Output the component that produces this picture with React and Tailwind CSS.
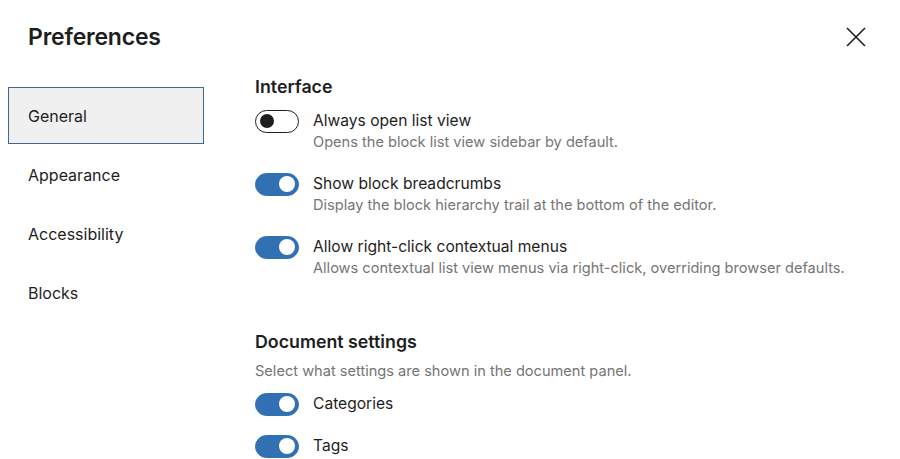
import React, { useState } from "react";

const Toggle = ({ checked, onChange }) => {
  return (
    <button
      type="button"
      onClick={onChange}
      className={
        checked
          ? "relative w-[44px] h-[23px] rounded-full bg-[#3171b3] border border-[#3171b3] shrink-0"
          : "relative w-[44px] h-[23px] rounded-full bg-white border-[1.5px] border-[#1e1e1e] shrink-0"
      }
    >
      <span
        className={
          checked
            ? "absolute top-1/2 -translate-y-1/2 right-[3px] w-[16px] h-[16px] rounded-full bg-white"
            : "absolute top-1/2 -translate-y-1/2 left-[4px] w-[14px] h-[14px] rounded-full bg-[#1e1e1e]"
        }
      />
    </button>
  );
};

const Option = ({ label, help, checked, onChange }) => (
  <div className="flex flex-col">
    <div className="flex items-center h-[20px]">
      <Toggle checked={checked} onChange={onChange} />
      <span className="ml-[14px] text-[15.6px] leading-[20px] text-[#1e1e1e]">{label}</span>
    </div>
    {help && (
      <p className="ml-[58px] mt-[1px] text-[14.6px] leading-[20px] text-[#757575]">{help}</p>
    )}
  </div>
);

const App = () => {
  const [tab, setTab] = useState("General");
  const [prefs, setPrefs] = useState({
    listView: false,
    breadcrumbs: true,
    contextMenus: true,
    categories: true,
    tags: true,
  });
  const flip = (key) => setPrefs({ ...prefs, [key]: !prefs[key] });
  const tabs = ["General", "Appearance", "Accessibility", "Blocks"];

  return (
    <div
      className="w-[900px] h-[459px] bg-white overflow-hidden"
      style={{ fontFamily: "Inter, 'Noto Sans', sans-serif" }}
    >
      <div className="flex items-center justify-between pl-[28px] pr-[32px] h-[74px]">
        <h1 className="text-[23px] font-semibold text-[#1e1e1e] tracking-[-0.2px]">Preferences</h1>
        <button type="button" className="w-[24px] h-[24px] flex items-center justify-center">
          <svg width="20" height="20" viewBox="0 0 20 20">
            <path d="M1 1 L19 19 M19 1 L1 19" stroke="#1e1e1e" strokeWidth="1.6" fill="none" />
          </svg>
        </button>
      </div>

      <div className="flex">
        <nav className="w-[196px] ml-[8px] mt-[13px] flex flex-col gap-[2px] shrink-0">
          {tabs.map((t) => (
            <button
              key={t}
              type="button"
              onClick={() => setTab(t)}
              className={
                tab === t
                  ? "h-[57px] text-left pl-[19px] pt-[1px] text-[16px] text-[#1e1e1e] bg-[#f0f0f0] border-[1.5px] border-[#40698f]"
                  : "h-[57px] text-left pl-[20px] text-[16px] text-[#1e1e1e]"
              }
            >
              {t}
            </button>
          ))}
        </nav>

        <div className="ml-[51px] mt-[3px] flex flex-col">
          <h2 className="text-[17.8px] leading-[20px] font-semibold text-[#1e1e1e]">Interface</h2>
          <div className="mt-[14px] flex flex-col gap-[22px]">
            <Option
              label="Always open list view"
              help="Opens the block list view sidebar by default."
              checked={prefs.listView}
              onChange={() => flip("listView")}
            />
            <Option
              label="Show block breadcrumbs"
              help="Display the block hierarchy trail at the bottom of the editor."
              checked={prefs.breadcrumbs}
              onChange={() => flip("breadcrumbs")}
            />
            <Option
              label="Allow right-click contextual menus"
              help="Allows contextual list view menus via right-click, overriding browser defaults."
              checked={prefs.contextMenus}
              onChange={() => flip("contextMenus")}
            />
          </div>

          <h2 className="mt-[54px] text-[17.8px] leading-[20px] font-semibold text-[#1e1e1e]">
            Document settings
          </h2>
          <p className="mt-[9px] text-[14.6px] leading-[20px] text-[#757575]">
            Select what settings are shown in the document panel.
          </p>
          <div className="mt-[13px] flex flex-col gap-[22px]">
            <Option label="Categories" checked={prefs.categories} onChange={() => flip("categories")} />
            <Option label="Tags" checked={prefs.tags} onChange={() => flip("tags")} />
          </div>
        </div>
      </div>
    </div>
  );
};

export default App;
